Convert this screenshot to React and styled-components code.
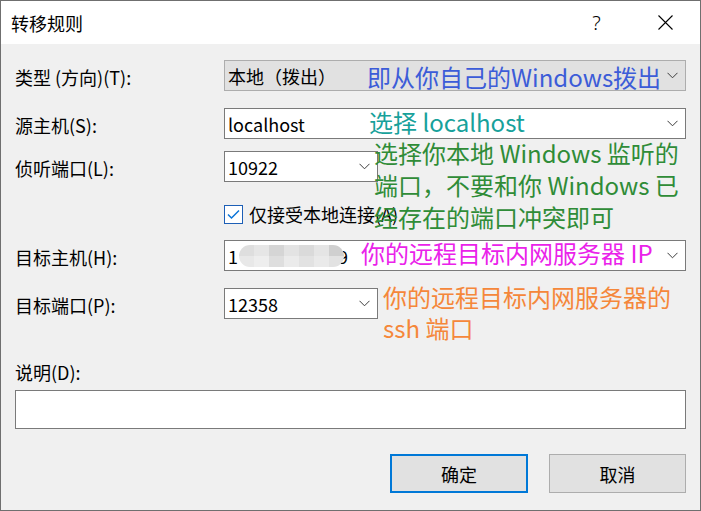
import React from "react";
import styled, { createGlobalStyle } from "styled-components";

const FONT = `"Noto Sans CJK SC", "Noto Sans", sans-serif`;

const GlobalStyle = createGlobalStyle`
  html, body { margin: 0; padding: 0; background: #f0f0f0; }
  body { font-family: ${FONT}; }
  * { box-sizing: border-box; }
`;

const Window = styled.div`
  position: relative;
  width: 701px;
  height: 511px;
  border: 1px solid #6f6f6f;
  background: #f0f0f0;
  display: flex;
  flex-direction: column;
  overflow: hidden;
  font-family: ${FONT};
  color: #000;
`;

const TitleBar = styled.div`
  height: 43px;
  background: #fff;
  display: flex;
  align-items: center;
  padding-left: 10px;
`;

const Title = styled.div`
  flex: 1;
  font-size: 18px;
  line-height: 24px;
`;

const CaptionButton = styled.div`
  width: 69px;
  height: 43px;
  display: flex;
  align-items: center;
  justify-content: center;
  font-size: 20px;
  font-weight: 300;
  font-family: "Noto Sans", sans-serif;
`;

const Body = styled.div`
  flex: 1;
  padding: 0 14px;
  display: flex;
  flex-direction: column;
`;

const Row = styled.div`
  display: grid;
  grid-template-columns: 209px 1fr;
  align-items: center;
  height: ${(p) => p.$h || 31}px;
  margin-top: ${(p) => p.$gap}px;
`;

const Label = styled.div`
  font-size: 18px;
  line-height: 26px;
  padding-top: ${(p) => p.$nudge || 3}px;
  white-space: nowrap;
`;

const Combo = styled.div`
  width: ${(p) => (p.$width ? `${p.$width}px` : "100%")};
  height: 31px;
  border: 1px solid ${(p) => (p.$readonly ? "#adadad" : "#7a7a7a")};
  background: ${(p) => (p.$readonly ? "#e1e1e1" : "#fff")};
  display: flex;
  align-items: center;
  padding: 0 7px 0 3px;
  font-size: 18px;
  line-height: 26px;
`;

const ComboText = styled.span`
  flex: 1;
  display: flex;
  align-items: center;
  white-space: nowrap;
`;

const Chevron = () => (
  <svg width="11" height="7" viewBox="0 0 11 7">
    <polyline points="0.5,0.8 5.5,5.8 10.5,0.8" fill="none" stroke="#3c3c3c" strokeWidth="1" />
  </svg>
);

const Mosaic = styled.span`
  display: inline-grid;
  grid-template-columns: repeat(7, 15px);
  grid-template-rows: 11px 11px;
  border-radius: 11px;
  overflow: hidden;
  margin-left: 1px;
  position: relative;
  z-index: 1;
`;

const Tile = styled.span`
  background: ${(p) => p.$c};
`;

const Nine = styled.span`
  margin-left: -6px;
`;

const CheckRow = styled.label`
  grid-column: 2;
  display: flex;
  align-items: center;
  gap: 6px;
  font-size: 18px;
  line-height: 26px;
`;

const CheckBox = styled.span`
  width: 19px;
  height: 19px;
  border: 1px solid #1d5fb6;
  background: #fff;
  display: flex;
  align-items: center;
  justify-content: center;
`;

const DescLabel = styled(Label)`
  margin-top: 40px;
  padding-top: 0;
`;

const TextBox = styled.div`
  margin-top: 5px;
  height: 39px;
  border: 1px solid #7a7a7a;
  background: #fff;
`;

const ButtonRow = styled.div`
  margin-top: 25px;
  display: flex;
  justify-content: flex-end;
  gap: 21px;
`;

const Button = styled.button`
  width: ${(p) => p.$w}px;
  height: 39px;
  background: #e1e1e1;
  border: ${(p) => (p.$primary ? "2px solid #0078d7" : "1px solid #adadad")};
  font-family: ${FONT};
  font-size: 18px;
  color: #000;
  padding: 0;
`;

const Note = styled.div`
  position: absolute;
  left: ${(p) => p.$x}px;
  top: ${(p) => p.$y}px;
  color: ${(p) => p.$color};
  font-size: 24px;
  line-height: ${(p) => p.$lh || 31}px;
  white-space: nowrap;
  pointer-events: none;
`;

const mosaicColors = [
  "#dedede", "#e6e6e6", "#d5d5d5", "#e3e3e3", "#dadada", "#e5e5e5", "#cfcfcf",
  "#e8e8e8", "#eeeeee", "#dedede", "#ebebeb", "#e2e2e2", "#eaeaea", "#e2e2e2",
];

export default function App() {
  return (
    <>
      <GlobalStyle />
      <Window>
        <TitleBar>
          <Title>转移规则</Title>
          <CaptionButton>?</CaptionButton>
          <CaptionButton>
            <svg width="15" height="15" viewBox="0 0 15 15">
              <path d="M0.5 0.5 L14.5 14.5 M14.5 0.5 L0.5 14.5" stroke="#000" strokeWidth="1.1" />
            </svg>
          </CaptionButton>
        </TitleBar>

        <Body>
          <Row $gap={16}>
            <Label>类型 (方向)(T):</Label>
            <Combo $readonly>
              <ComboText>本地（拨出）</ComboText>
              <Chevron />
            </Combo>
          </Row>

          <Row $gap={17}>
            <Label>源主机(S):</Label>
            <Combo>
              <ComboText>localhost</ComboText>
              <Chevron />
            </Combo>
          </Row>

          <Row $gap={12}>
            <Label>侦听端口(L):</Label>
            <Combo $width={154}>
              <ComboText>10922</ComboText>
              <Chevron />
            </Combo>
          </Row>

          <Row $gap={19} $h={20}>
            <CheckRow>
              <CheckBox>
                <svg width="13" height="11" viewBox="0 0 13 11">
                  <polyline points="1,5.5 4.5,9 12,1.5" fill="none" stroke="#0a74d8" strokeWidth="1.5" />
                </svg>
              </CheckBox>
              仅接受本地连接(A)
            </CheckRow>
          </Row>

          <Row $gap={19}>
            <Label>目标主机(H):</Label>
            <Combo>
              <ComboText>
                1
                <Mosaic>
                  {mosaicColors.map((c, i) => (
                    <Tile key={i} $c={c} />
                  ))}
                </Mosaic>
                <Nine>9</Nine>
              </ComboText>
              <Chevron />
            </Combo>
          </Row>

          <Row $gap={17}>
            <Label>目标端口(P):</Label>
            <Combo $width={154}>
              <ComboText>12358</ComboText>
              <Chevron />
            </Combo>
          </Row>

          <DescLabel>说明(D):</DescLabel>
          <TextBox />

          <ButtonRow>
            <Button $primary $w={138}>确定</Button>
            <Button $w={137}>取消</Button>
          </ButtonRow>
        </Body>

        <Note $x={366} $y={60} $color="#3c5cd8">即从你自己的Windows拨出</Note>
        <Note $x={368} $y={105} $color="#17a19b">选择 localhost</Note>
        <Note $x={373} $y={136} $lh={32} $color="#2f8c37">
          选择你本地 Windows 监听的
          <br />
          端口，不要和你 Windows 已
          <br />
          经存在的端口冲突即可
        </Note>
        <Note $x={360} $y={236} $color="#ea22ea">你的远程目标内网服务器 IP</Note>
        <Note $x={382} $y={280} $color="#f5873a">
          你的远程目标内网服务器的
          <br />
          ssh 端口
        </Note>
      </Window>
    </>
  );
}
